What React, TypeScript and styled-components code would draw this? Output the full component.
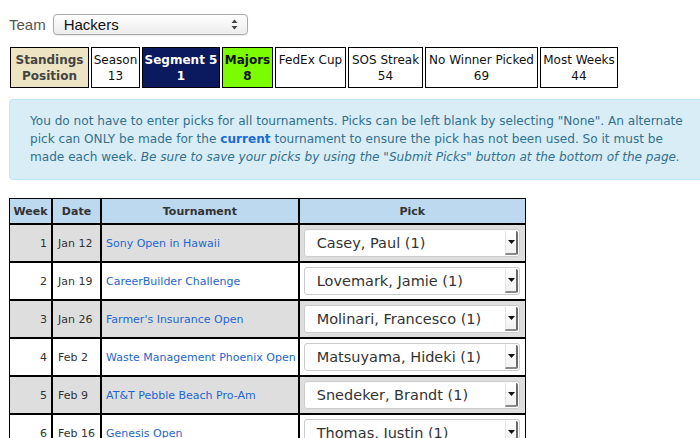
import React from 'react';
import styled, { createGlobalStyle } from 'styled-components';

const GlobalStyle = createGlobalStyle`
  html, body {
    margin: 0;
    padding: 0;
    background: #ffffff;
    overflow: hidden;
  }
  body {
    font-family: 'DejaVu Sans', Verdana, sans-serif;
  }
`;

type Stat = {
  label: string;
  value?: string;
  variant?: 'head' | 'segment' | 'majors' | 'plain';
  width: number;
};

const stats: Stat[] = [
  { label: 'Standings', value: 'Position', variant: 'head', width: 79 },
  { label: 'Season', value: '13', width: 49 },
  { label: 'Segment 5', value: '1', variant: 'segment', width: 78 },
  { label: 'Majors', value: '8', variant: 'majors', width: 51 },
  { label: 'FedEx Cup', value: '', width: 71 },
  { label: 'SOS Streak', value: '54', width: 75 },
  { label: 'No Winner Picked', value: '69', width: 113 },
  { label: 'Most Weeks', value: '44', width: 78 },
];

const weeks = [
  { week: 1, date: 'Jan 12', name: 'Sony Open in Hawaii', pick: 'Casey, Paul (1)' },
  { week: 2, date: 'Jan 19', name: 'CareerBuilder Challenge', pick: 'Lovemark, Jamie (1)' },
  { week: 3, date: 'Jan 26', name: "Farmer's Insurance Open", pick: 'Molinari, Francesco (1)' },
  { week: 4, date: 'Feb 2', name: 'Waste Management Phoenix Open', pick: 'Matsuyama, Hideki (1)' },
  { week: 5, date: 'Feb 9', name: 'AT&T Pebble Beach Pro-Am', pick: 'Snedeker, Brandt (1)' },
  { week: 6, date: 'Feb 16', name: 'Genesis Open', pick: 'Thomas, Justin (1)' },
];

export default function App() {
  return (
    <Page>
      <GlobalStyle />
      <TeamRow>
        <TeamLabel>Team</TeamLabel>
        <TeamSelect>
          <span>Hackers</span>
          <svg width="7" height="11" viewBox="0 0 7 11">
            <path d="M3.5 0.5 L6.5 4 L0.5 4 Z" fill="#444" />
            <path d="M3.5 10.5 L6.5 7 L0.5 7 Z" fill="#444" />
          </svg>
        </TeamSelect>
      </TeamRow>

      <StatsRow>
        {stats.map((s, i) => (
          <StatBox key={i} variant={s.variant || 'plain'} style={{ width: s.width }}>
            <div>{s.label}</div>
            <div>{s.value || '\u00a0'}</div>
          </StatBox>
        ))}
      </StatsRow>

      <InfoBox>
        You do not have to enter picks for all tournaments. Picks can be left blank by selecting "None". An alternate
        <br />
        pick can ONLY be made for the <Current>current</Current> tournament to ensure the pick has not been used. So it must be
        <br />
        made each week. <em>Be sure to save your picks by using the "Submit Picks" button at the bottom of the page.</em>
      </InfoBox>

      <PicksTable>
        <thead>
          <tr>
            <HeadCell style={{ width: 41 }}>Week</HeadCell>
            <HeadCell style={{ width: 47 }}>Date</HeadCell>
            <HeadCell style={{ width: 194 }}>Tournament</HeadCell>
            <HeadCell>Pick</HeadCell>
          </tr>
        </thead>
        <tbody>
          {weeks.map((w) => (
            <Row key={w.week} shaded={w.week % 2 === 1}>
              <WeekCell>{w.week}</WeekCell>
              <Cell>{w.date}</Cell>
              <TourCell>
                <TourLink>{w.name}</TourLink>
              </TourCell>
              <PickCell>
                <PickSelect>
                  <span>{w.pick}</span>
                  <ArrowBox>
                    <svg width="7" height="4" viewBox="0 0 7 4">
                      <path d="M0 0 L7 0 L3.5 4 Z" fill="#111" />
                    </svg>
                  </ArrowBox>
                </PickSelect>
              </PickCell>
            </Row>
          ))}
        </tbody>
      </PicksTable>
    </Page>
  );
}

const Page = styled.div`
  padding: 13px 0 0 9px;
  width: 700px;
  box-sizing: border-box;
`;

const TeamRow = styled.div`
  display: flex;
  align-items: center;
  height: 22px;
`;

const TeamLabel = styled.div`
  font-family: 'Liberation Sans', Arial, sans-serif;
  font-size: 15px;
  color: #555555;
  margin-right: 7px;
`;

const TeamSelect = styled.div`
  width: 195px;
  height: 21px;
  box-sizing: border-box;
  border: 1px solid #aaaaaa;
  border-radius: 4px;
  background: linear-gradient(#ffffff, #ececec);
  display: flex;
  align-items: center;
  justify-content: space-between;
  padding: 0 9px 0 10px;
  font-family: 'Liberation Sans', Arial, sans-serif;
  font-size: 15px;
  color: #111111;
  box-shadow: 0 1px 1px rgba(0, 0, 0, 0.08);
`;

const StatsRow = styled.div`
  display: flex;
  gap: 2px;
  margin-top: 12px;
  margin-left: 1px;
`;

const StatBox = styled.div<{ variant: 'head' | 'segment' | 'majors' | 'plain' }>`
  box-sizing: border-box;
  height: 41px;
  border: 1px solid #000000;
  display: flex;
  flex-direction: column;
  align-items: center;
  justify-content: center;
  font-size: 12px;
  line-height: 16px;
  white-space: nowrap;
  font-weight: ${(p) => (p.variant === 'plain' ? 400 : 700)};
  color: ${(p) =>
    p.variant === 'segment' ? '#ffffff' : p.variant === 'head' ? '#444444' : '#111111'};
  background: ${(p) =>
    p.variant === 'head'
      ? '#ece4c2'
      : p.variant === 'segment'
      ? '#0b1a5e'
      : p.variant === 'majors'
      ? '#7cfc00'
      : '#ffffff'};
`;

const InfoBox = styled.div`
  margin-top: 11px;
  width: 720px;
  box-sizing: border-box;
  padding: 12px 20px 13px 20px;
  background: #d9edf7;
  border: 1px solid #bce8f1;
  border-radius: 4px;
  color: #31708f;
  font-size: 12.1px;
  line-height: 18px;
  white-space: nowrap;

  em {
    font-style: oblique;
  }
`;

const Current = styled.b`
  color: #1a6bd1;
`;

const PicksTable = styled.table`
  margin-top: 18px;
  border-collapse: separate;
  border-spacing: 0;
  width: 517px;
  font-size: 11px;
  color: #333333;
`;

const HeadCell = styled.th`
  background: #bcd9ef;
  border: 1px solid #000000;
  height: 24px;
  font-weight: 700;
  font-size: 11px;
  color: #333333;
  padding: 0;
`;

const Row = styled.tr<{ shaded: boolean }>`
  background: ${(p) => (p.shaded ? '#dedede' : '#ffffff')};
  height: 38px;
`;

const Cell = styled.td`
  border: 1px solid #000000;
  padding: 0 4px 0 5px;
  white-space: nowrap;
`;

const WeekCell = styled(Cell)`
  text-align: right;
  padding-right: 4px;
`;

const TourCell = styled(Cell)`
  padding: 0 2px 0 4px;
`;

const TourLink = styled.span`
  color: #1e66d0;
`;

const PickCell = styled(Cell)`
  padding: 0 5px 0 4px;
`;

const PickSelect = styled.div`
  height: 28px;
  box-sizing: border-box;
  border: 1px solid #cccccc;
  border-radius: 3px;
  background: #ffffff;
  display: flex;
  align-items: center;
  justify-content: space-between;
  padding-left: 12px;
  font-size: 14.5px;
  color: #333333;
`;

const ArrowBox = styled.div`
  width: 13px;
  height: 24px;
  margin-right: 1px;
  box-sizing: border-box;
  border-left: 1px solid #e4e4e4;
  border-right: 2px solid #6a6a6a;
  border-bottom: 2px solid #8a8a8a;
  border-radius: 0 2px 2px 0;
  background: linear-gradient(#ffffff, #f2f2f2);
  display: flex;
  align-items: center;
  justify-content: center;
`;
